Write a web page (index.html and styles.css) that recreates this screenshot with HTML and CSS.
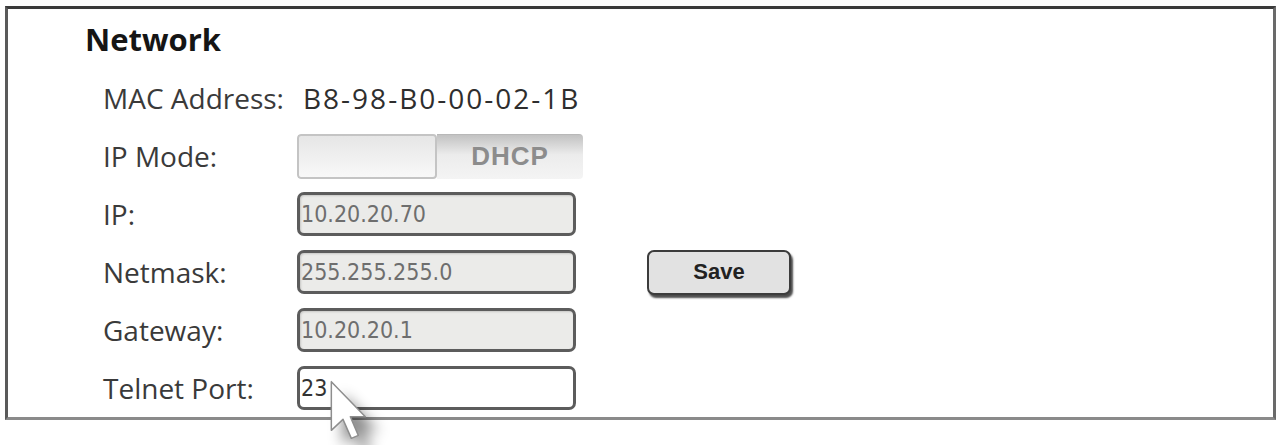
FILE: index.html
```html
<!DOCTYPE html>
<html lang="en">
<head>
    <meta charset="UTF-8">
    <title>Network Settings</title>
    <link rel="stylesheet" href="styles.css">
</head>
<body>

    <div class="panel">
        <div class="heading">Network</div>

        <div class="form">
            <div class="label">MAC Address:</div>
            <div class="mac">B8-98-B0-00-02-1B</div>
            <div></div>

            <div class="label">IP Mode:</div>
            <div class="toggle">
                <span class="toggle-off"></span>
                <span class="toggle-on">DHCP</span>
            </div>
            <div></div>

            <div class="label">IP:</div>
            <input class="field" type="text" value="10.20.20.70" disabled>
            <div></div>

            <div class="label">Netmask:</div>
            <input class="field" type="text" value="255.255.255.0" disabled>
            <div><button class="save-btn">Save</button></div>

            <div class="label">Gateway:</div>
            <input class="field" type="text" value="10.20.20.1" disabled>
            <div></div>

            <div class="label">Telnet Port:</div>
            <input class="field" type="text" value="23">
            <div></div>
        </div>

        <!-- Mouse pointer over the port field -->
        <svg class="pointer" width="40" height="64" viewBox="0 0 12 19">
            <path d="M1 1 L1 15.6 L4.5 12.3 L7 18 L9.1 17.1 L6.7 11.5 L11.2 11.5 Z"
                  fill="#fff" stroke="#8e8e8e" stroke-width="0.45" stroke-linejoin="round"/>
        </svg>
    </div>

</body>
</html>
```

FILE: styles.css
```css
/* Basic Reset */
* {
    margin: 0;
    padding: 0;
    box-sizing: border-box;
}

html, body {
    height: 100%;
}

body {
    font-family: 'Open Sans', sans-serif;
    background: #fff;
    color: #333;
    min-height: 445px;
}

/* Outer frame */
.panel {
    position: relative;
    margin: 6px 2px 0 5px;
    border-top: 3px solid #3a3a3a;
    border-left: 3px solid #5a5a5a;
    border-right: 3px solid #6a6a6a;
    border-bottom: 3px solid #8a8a8a;
    padding-left: 77px;
}

.heading {
    font-size: 31px;
    font-weight: bold;
    color: #151515;
    line-height: 36px;
    margin-top: 12px;
    margin-bottom: 12px;
}

/* Label / control rows */
.form {
    display: grid;
    grid-template-columns: 194px 286px auto;
    grid-auto-rows: 58px;
    align-items: center;
    padding-left: 18px;
}

.label, .mac {
    font-size: 28px;
    color: #3a3a3a;
    white-space: nowrap;
}

.mac {
    margin-left: 6px;
    letter-spacing: 2px;
    color: #2e2e2e;
}

/* IP mode switch */
.toggle {
    display: flex;
    width: 286px;
    height: 45px;
    border-radius: 4px;
    overflow: hidden;
}

.toggle-off {
    width: 140px;
    border: 2px solid #c4c4c4;
    border-radius: 4px;
    background: linear-gradient(#e6e6e6, #f8f8f8);
}

.toggle-on {
    flex: 1;
    display: flex;
    align-items: center;
    justify-content: center;
    font-family: 'Liberation Sans', Arial, sans-serif;
    font-weight: bold;
    font-size: 26px;
    letter-spacing: 1px;
    color: #8c8c8c;
    background: linear-gradient(#c2c2c2, #ececec 45%, #f4f4f4);
    border-top: 1px solid #b8b8b8;
}

/* Text fields */
.field {
    width: 279px;
    height: 44px;
    border: 3px solid #5c5c5c;
    border-radius: 7px;
    background: #ebebe9;
    padding: 0 1px;
    font-family: 'DejaVu Sans', sans-serif;
    font-stretch: condensed;
    font-size: 23px;
    color: #6e6e6e;
    box-shadow: inset 1px 1px 2px rgba(0, 0, 0, 0.15);
}

.field:not([disabled]) {
    background: #fff;
    color: #333;
    box-shadow: none;
}

.save-btn {
    margin-left: 64px;
    width: 144px;
    height: 45px;
    border: 2px solid #3c3c3c;
    border-radius: 7px;
    background: #e2e2e2;
    font-family: 'Liberation Sans', Arial, sans-serif;
    font-weight: bold;
    font-size: 22px;
    color: #222;
    box-shadow: 2px 3px 2px rgba(0, 0, 0, 0.7);
}

.pointer {
    position: absolute;
    left: 320px;
    top: 369px;
    z-index: 5;
    overflow: visible;
    filter: drop-shadow(12px 14px 7px rgba(0, 0, 0, 0.45));
}
```
